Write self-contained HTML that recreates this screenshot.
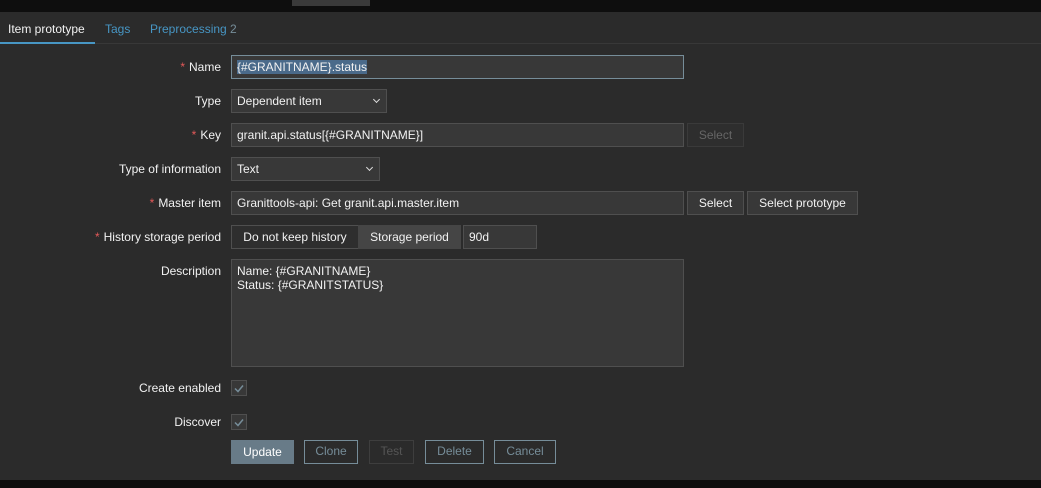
<!DOCTYPE html>
<html><head><style>
body{margin:0;width:1041px;height:488px;background:#2b2b2b;font-family:"Liberation Sans",sans-serif;font-size:12px;color:#f2f2f2;position:relative;overflow:hidden}
.a{position:absolute;box-sizing:border-box}
.top{left:0;top:0;width:1041px;height:12px;background:#0e0e0e}
.bot{left:0;top:480px;width:1041px;height:8px;background:#0e0e0e}
.lbl{right:820px;text-align:right;white-space:nowrap;line-height:24px}
.req{color:#e45959;margin-right:4px}
.in{background:#383838;border:1px solid #4f4f4f;line-height:22px;padding-left:5px;white-space:nowrap}
.btn{border:1px solid #4f4f4f;background:#383838;text-align:center;line-height:22px}
.ob{border:1px solid #768d99;color:#768d99;text-align:center;line-height:21px}
.chev{position:absolute;right:7px;top:7px;width:4px;height:4px;border-right:1px solid #ddd;border-bottom:1px solid #ddd;transform:rotate(45deg)}
.cb{width:16px;height:16px;background:#383838;border:1px solid #4f4f4f}
</style></head><body>
<div class="a top"></div>
<div class="a" style="left:292px;top:0;width:78px;height:6px;background:#3a3a3a"></div>
<div class="a" style="left:8px;top:22px">Item prototype</div>
<div class="a" style="left:105px;top:22px;color:#4796c4">Tags</div>
<div class="a" style="left:150px;top:22px;color:#4796c4">Preprocessing <span style="color:#768d99">2</span></div>
<div class="a" style="left:0;top:43px;width:1041px;height:1px;background:#383838"></div>
<div class="a" style="left:0;top:42px;width:95px;height:2px;background:#4796c4"></div>

<div class="a lbl" style="top:55px"><span class="req">*</span>Name</div>
<div class="a in" style="left:231px;top:55px;width:453px;height:24px;border-color:#768d99"><span style="background:#4a6a8a">{#GRANITNAME}.status</span></div>

<div class="a lbl" style="top:89px">Type</div>
<div class="a in" style="left:231px;top:89px;width:156px;height:24px">Dependent item<i class="chev"></i></div>

<div class="a lbl" style="top:123px"><span class="req">*</span>Key</div>
<div class="a in" style="left:231px;top:123px;width:453px;height:24px">granit.api.status[{#GRANITNAME}]</div>
<div class="a btn" style="left:687px;top:123px;width:57px;height:24px;color:#666;background:#2e2e2e;border-color:#3a3a3a">Select</div>

<div class="a lbl" style="top:157px">Type of information</div>
<div class="a in" style="left:231px;top:157px;width:149px;height:24px">Text<i class="chev"></i></div>

<div class="a lbl" style="top:191px"><span class="req">*</span>Master item</div>
<div class="a in" style="left:231px;top:191px;width:453px;height:24px">Granittools-api: Get granit.api.master.item</div>
<div class="a btn" style="left:687px;top:191px;width:57px;height:24px">Select</div>
<div class="a btn" style="left:747px;top:191px;width:111px;height:24px">Select prototype</div>

<div class="a lbl" style="top:225px"><span class="req">*</span>History storage period</div>
<div class="a btn" style="left:231px;top:225px;width:128px;height:24px;background:#2e2e2e">Do not keep history</div>
<div class="a btn" style="left:358px;top:225px;width:103px;height:24px;background:#454545;border-color:#454545">Storage period</div>
<div class="a in" style="left:463px;top:225px;width:74px;height:24px">90d</div>

<div class="a lbl" style="top:259px">Description</div>
<div class="a in" style="left:231px;top:259px;width:453px;height:108px;line-height:14px;padding-top:4px">Name: {#GRANITNAME}<br>Status: {#GRANITSTATUS}</div>

<div class="a lbl" style="top:376px">Create enabled</div>
<div class="a cb" style="left:231px;top:380px"><svg width="14" height="14" style="position:absolute;left:0;top:0"><path d="M3 7.5l3 3 5-6" stroke="#768d99" stroke-width="1.5" fill="none"/></svg></div>
<div class="a lbl" style="top:410px">Discover</div>
<div class="a cb" style="left:231px;top:414px"><svg width="14" height="14" style="position:absolute;left:0;top:0"><path d="M3 7.5l3 3 5-6" stroke="#768d99" stroke-width="1.5" fill="none"/></svg></div>

<div class="a" style="left:231px;top:440px;width:63px;height:24px;background:#687b88;color:#fff;text-align:center;line-height:24px">Update</div>
<div class="a ob" style="left:304px;top:440px;width:54px;height:24px">Clone</div>
<div class="a ob" style="left:369px;top:440px;width:45px;height:24px;border-color:#3e3e3e;color:#555">Test</div>
<div class="a ob" style="left:425px;top:440px;width:59px;height:24px">Delete</div>
<div class="a ob" style="left:494px;top:440px;width:62px;height:24px">Cancel</div>
<div class="a bot"></div>
</body></html>
